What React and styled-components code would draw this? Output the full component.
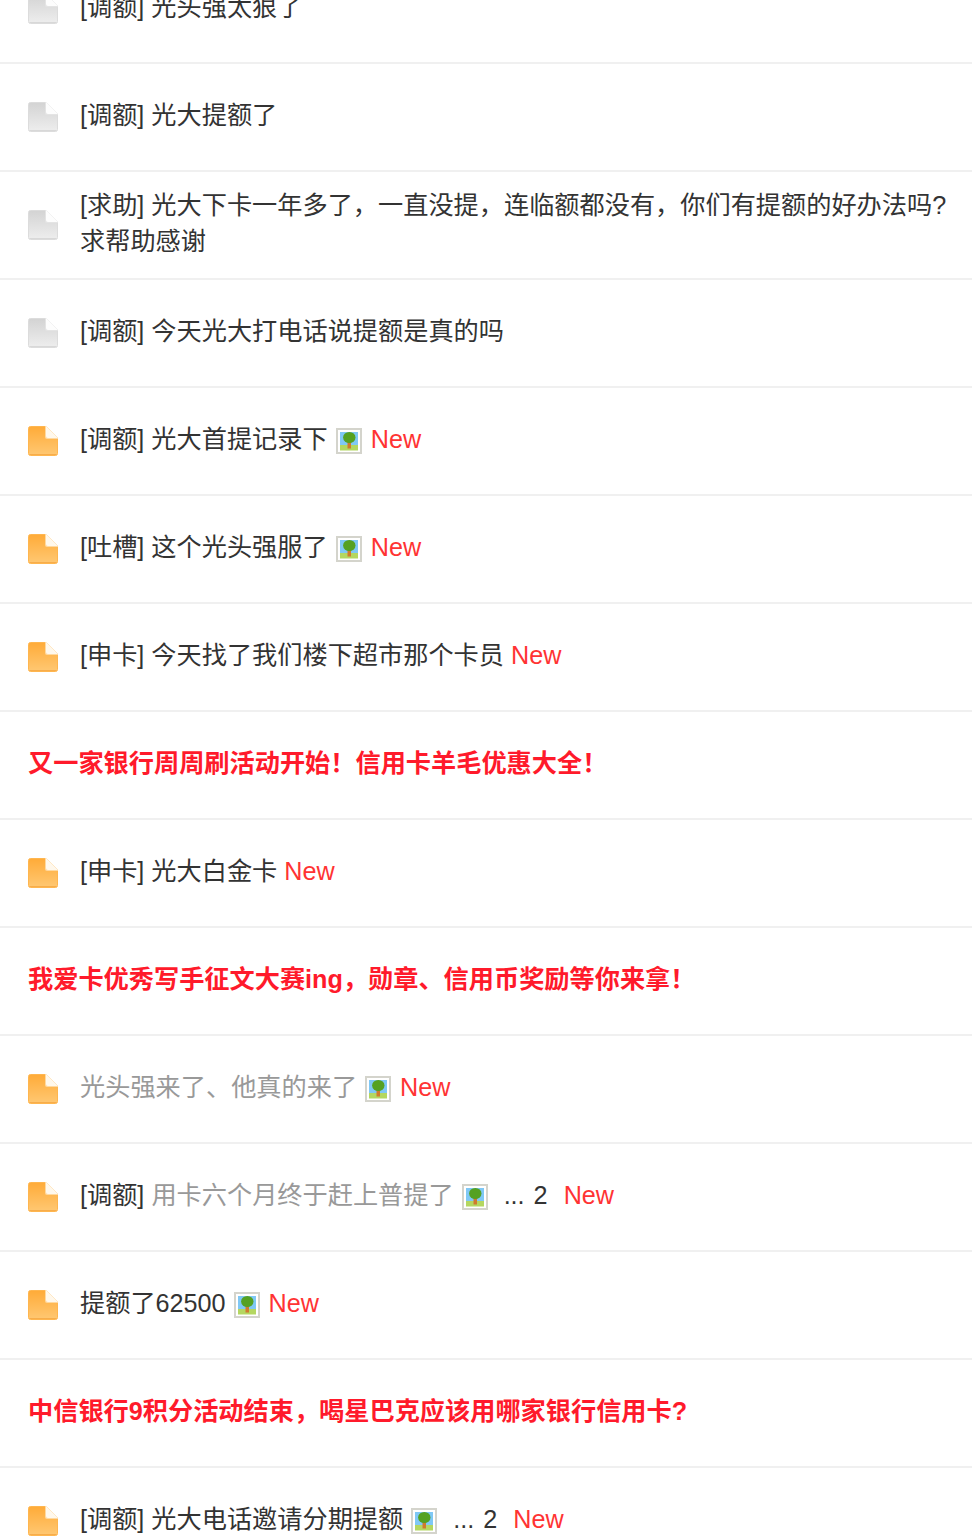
import React from "react";
import styled, { createGlobalStyle } from "styled-components";

const Global = createGlobalStyle`
  html, body { margin: 0; padding: 0; background: #fff; overflow: hidden; }
  body { font-family: "Liberation Sans", "Noto Sans CJK SC", sans-serif; }
`;

const List = styled.ul`
  list-style: none;
  margin: -44px 0 0;
  padding: 0;
  height: 1580px;
  overflow: hidden;
`;

const Row = styled.li`
  box-sizing: border-box;
  height: 108px;
  display: flex;
  align-items: center;
  padding: 0 20px 0 28px;
  border-bottom: 2px solid #f0f0f0;
`;

const Title = styled.div`
  margin: 0 0 4px 22px;
  font-size: 25.2px;
  line-height: 36px;
  color: #333;
`;

const Promo = styled.div`
  margin: 0 0 4px;
  font-size: 25.2px;
  line-height: 36px;
  font-weight: 700;
  color: #ff1a2b;
`;

const Muted = styled.span`
  color: #999;
`;

const NewTag = styled.span`
  color: #ff3333;
  margin-left: ${(p) => p.$gap ?? 9}px;
`;

const Pages = styled.span`
  margin-left: 16px;
  word-spacing: 2px;
`;

const Thumb = styled.svg`
  width: 26px;
  height: 26px;
  margin-left: 8px;
  vertical-align: -6px;
`;

const Doc = styled.svg`
  width: 30px;
  height: 30px;
  flex: none;
`;

function FileIcon({ active, id }) {
  const c = active
    ? { a: "#ffab38", b: "#ffc873", e: "#f7ad4b", f1: "#fff8ec", f2: "#ffd9a0", s: "#ffb64f" }
    : { a: "#d3d3d3", b: "#eeeeee", e: "#d8d8d8", f1: "#fdfdfd", f2: "#e4e4e4", s: "#dcdcdc" };
  return (
    <Doc viewBox="0 0 30 30">
      <defs>
        <linearGradient id={id} x1="0" y1="0" x2="0" y2="1">
          <stop offset="0" stopColor={c.a} />
          <stop offset="1" stopColor={c.b} />
        </linearGradient>
      </defs>
      <path
        d="M2.5 .5H18L29.5 12V27.5a2 2 0 0 1-2 2H2.5a2 2 0 0 1-2-2V2.5a2 2 0 0 1 2-2Z"
        fill={`url(#${id})`}
        stroke={c.s}
      />
      <path d="M1.5 28.5h27" stroke={c.e} strokeWidth="1" />
      <path d="M17 0H18L30 12V13H19a2 2 0 0 1-2-2Z" fill={c.f2} />
      <path d="M18 0L30 12H20a2 2 0 0 1-2-2Z" fill={c.f1} />
    </Doc>
  );
}

function PicIcon() {
  return (
    <Thumb viewBox="0 0 26 26">
      <rect x="1" y="1" width="24" height="24" fill="#fff" stroke="#d4d4cc" strokeWidth="2" />
      <rect x="4" y="4" width="18" height="13" fill="#7fc8f5" />
      <rect x="4" y="17" width="18" height="5.5" fill="#b4d760" />
      <rect x="11.5" y="12" width="3.5" height="8.5" fill="#cf7a2e" />
      <ellipse cx="13.3" cy="9.5" rx="6.2" ry="5.6" fill="#55a122" />
    </Thumb>
  );
}

const rows = [
  { t: "[调额] 光头强太狠了" },
  { t: "[调额] 光大提额了" },
  { t: "[求助] 光大下卡一年多了，一直没提，连临额都没有，你们有提额的好办法吗?求帮助感谢" },
  { t: "[调额] 今天光大打电话说提额是真的吗" },
  { t: "[调额] 光大首提记录下", a: 1, pic: 1, n: 1 },
  { t: "[吐槽] 这个光头强服了", a: 1, pic: 1, n: 1 },
  { t: "[申卡] 今天找了我们楼下超市那个卡员", a: 1, n: 1 },
  { promo: "又一家银行周周刷活动开始！信用卡羊毛优惠大全！" },
  { t: "[申卡] 光大白金卡", a: 1, n: 1 },
  { promo: "我爱卡优秀写手征文大赛ing，勋章、信用币奖励等你来拿！" },
  { m: "光头强来了、他真的来了", a: 1, pic: 1, n: 1 },
  { t: "[调额] ", m: "用卡六个月终于赶上普提了", a: 1, pic: 1, page: 1, n: 1 },
  { t: "提额了62500", a: 1, pic: 1, n: 1 },
  { promo: "中信银行9积分活动结束，喝星巴克应该用哪家银行信用卡?" },
  { t: "[调额] 光大电话邀请分期提额", a: 1, pic: 1, page: 1, n: 1 },
];

export default function App() {
  return (
    <>
      <Global />
      <List>
        {rows.map((r, i) => (
          <Row key={i}>
            {r.promo ? (
              <Promo>{r.promo}</Promo>
            ) : (
              <>
                <FileIcon active={r.a} id={`doc-${i}`} />
                <Title>
                  {r.t}
                  {r.m && <Muted>{r.m}</Muted>}
                  {r.pic && <PicIcon />}
                  {r.page && <Pages>... 2</Pages>}
                  {r.n && <NewTag $gap={r.page ? 16 : r.pic ? 9 : 7}>New</NewTag>}
                </Title>
              </>
            )}
          </Row>
        ))}
      </List>
    </>
  );
}
